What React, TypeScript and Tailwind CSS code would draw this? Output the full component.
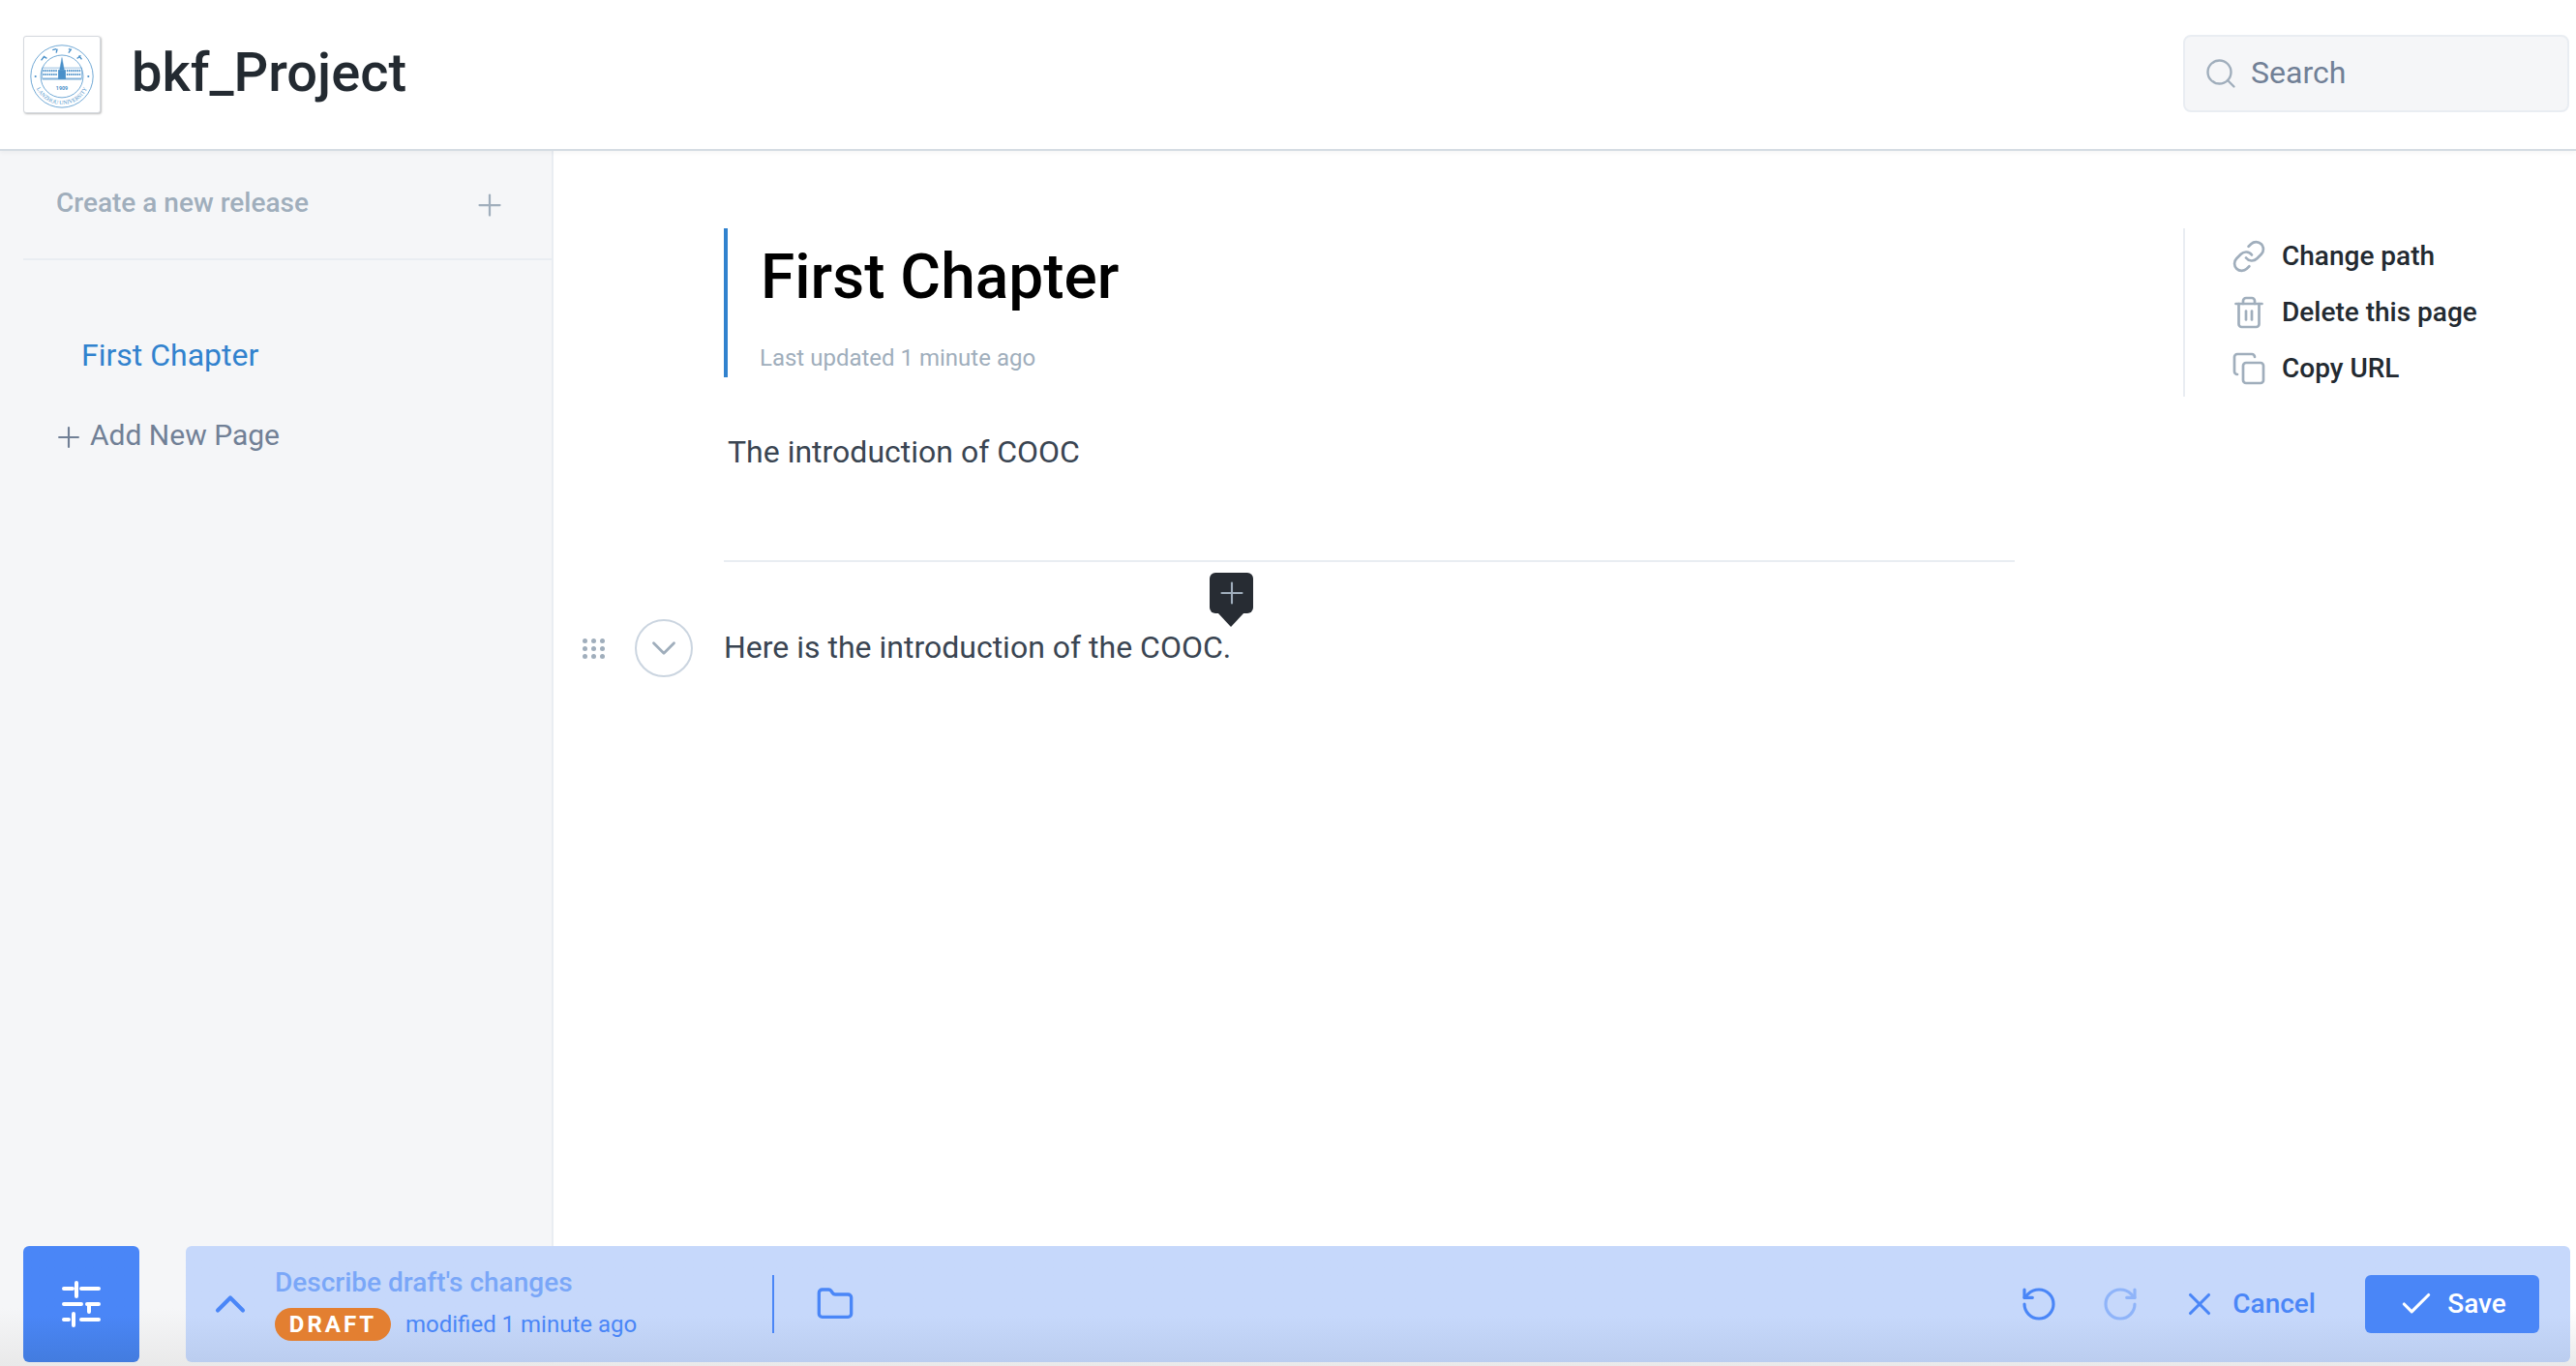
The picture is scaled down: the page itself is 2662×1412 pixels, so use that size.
import { Check, ChevronDown, ChevronUp, Copy, Folder, Link, Plus, RotateCcw, RotateCw, Search, Trash2, X } from "lucide-react"

function Logo() {
  return (
    <div className="w-[80px] h-[80px] shrink-0 rounded-[3px] border border-[#d5d9de] bg-white shadow-[1px_1px_2px_rgba(0,0,0,0.25)]">
      <svg viewBox="0 0 80 80" className="w-full h-full" fill="none" stroke="#4a90c9">
        <circle cx="40" cy="42" r="33" strokeWidth="0.8" />
        <circle cx="40" cy="42" r="22.5" strokeWidth="0.8" />
        {/* building */}
        <path d="M19 33h42v11H19z" strokeWidth="0.6" />
        <path d="M20 36h15M45 36h15M20 40h15M45 40h15" strokeWidth="2.2" strokeDasharray="1.4 0.8" />
        <path d="M40 22l-2.4 13h4.8z" fill="#4a90c9" strokeWidth="0.4" />
        <path d="M36 35h8v10h-8z" fill="#4a90c9" stroke="none" />
        <path d="M19 45h42" strokeWidth="1" />
        <circle cx="12" cy="42" r="1.1" fill="#4a90c9" stroke="none" />
        <circle cx="68" cy="42" r="1.1" fill="#4a90c9" stroke="none" />
        <path id="seal-arc" d="M11.5 50a29.5 29.5 0 0 0 57 0" stroke="none" />
        <text fontSize="6" fill="#4a90c9" stroke="none" fontFamily="Liberation Serif, serif" textAnchor="middle">
          <textPath href="#seal-arc" startOffset="50%">LANZHOU UNIVERSITY</textPath>
        </text>
        <text x="40" y="56" textAnchor="middle" fontSize="5.5" fontWeight="700" fill="#4a90c9" stroke="none" fontFamily="Roboto, sans-serif">1909</text>
        <path d="M18 25l3-4 3 2M30 14l4-1M34 17l1-4M47 13l3 1M47 17l3-4M58 20l3 4M56 23l4-3" strokeWidth="1.4" />
      </svg>
    </div>
  )
}

function DragDots() {
  const dots = [0, 1, 2, 3, 4, 5, 6, 7, 8]
  return (
    <div className="w-[23px] grid grid-cols-3 gap-x-[4px] gap-y-[3px]">
      {dots.map((d) => (
        <span key={d} className="w-[5px] h-[5px] rounded-full bg-[#a0aebc]"></span>
      ))}
    </div>
  )
}

function SettingsIcon() {
  return (
    <svg width="40" height="48" viewBox="0 0 40 48" fill="none" stroke="white" strokeWidth="4" strokeLinecap="round">
      <path d="M2 8h9M20 8h18M15 2v14" />
      <path d="M2 24h18M26 24h12M28 24v8" />
      <path d="M2 40h5M20 40h18M12 34v12" />
    </svg>
  )
}

export default function App() {
  return (
    <div className="relative h-[1412px] w-[2662px] overflow-hidden bg-white font-['Roboto',sans-serif] flex flex-col">
      {/* Header */}
      <header className="h-[156px] shrink-0 border-b-2 border-[#d5dce3] flex items-center pl-[24px] pr-[7px] shadow-[0_2px_4px_rgba(0,0,0,0.04)] z-10 bg-white">
        <Logo />
        <h1 className="ml-[32px] text-[56px] leading-none font-medium text-[#232a31] -mt-[4px]">bkf_Project</h1>
        <div className="ml-auto w-[399px] h-[80px] rounded-[8px] border-2 border-[#e9edf2] bg-[#f5f6f8] flex items-center pl-[19px] -mt-[2px]">
          <Search size={36} strokeWidth={1.6} className="text-[#a0aebc]" />
          <span className="ml-[13px] -mt-[2px] text-[32px] text-[#718096]">Search</span>
        </div>
      </header>

      <div className="flex-1 flex min-h-0">
        {/* Sidebar */}
        <aside className="w-[572px] shrink-0 bg-[#f5f6f8] border-r-2 border-[#e9edf2] pl-[24px]">
          <div className="h-[113px] border-b-2 border-[#e9edf2] flex items-center pl-[34px] pr-[46px] justify-between">
            <span className="text-[28px] font-medium text-[#a0aebc] -mt-[3px]">Create a new release</span>
            <Plus size={36} strokeWidth={1.5} className="text-[#a0aebc]" />
          </div>
          <div className="pl-[60px] pt-[79px] text-[32px] leading-[38px] text-[#3182ce]">First Chapter</div>
          <div className="mt-[44px] flex items-center text-[30px] leading-[36px] text-[#718096]">
            <Plus size={34} strokeWidth={1.5} className="ml-[30px] mt-[5px]" />
            <span className="ml-[5px]">Add New Page</span>
          </div>
        </aside>

        {/* Page content */}
        <main className="flex-1 flex items-start min-w-0 pt-[80px]">
          <div className="w-[1684px] shrink-0 pl-[176px]">
            <div className="w-[1334px]">
              <div className="h-[154px] border-l-4 border-[#3182ce] pl-[34px] pt-[13px]">
                <h2 className="text-[64px] leading-[75px] font-medium text-black">First Chapter</h2>
                <p className="mt-[32px] -ml-[1px] text-[24px] leading-[28px] text-[#a0aebc]">Last updated 1 minute ago</p>
              </div>
              <p className="mt-[58px] pl-[4px] text-[32px] leading-[38px] text-[#3a4552]">The introduction of COOC</p>
              <div className="mt-[93px] h-[2px] bg-[#e9edf2]"></div>
            </div>
            <div className="relative mt-[59px] -ml-[146px] flex items-center">
              <DragDots />
              <span className="ml-[31px] w-[60px] h-[60px] rounded-full border-2 border-[#cbd5e0] flex items-center justify-center">
                <ChevronDown size={42} strokeWidth={1.6} className="text-[#a0aebc]" />
              </span>
              <p className="ml-[32px] -mt-[2px] text-[32px] leading-[38px] text-[#3a4552]">Here is the introduction of the COOC.</p>
              <div className="absolute left-[648px] -top-[48px] w-[45px] h-[42px] rounded-[6px] bg-[#272c33] flex items-center justify-center">
                <Plus size={36} strokeWidth={1.4} className="text-[#a0aebc]" />
                <span className="absolute left-[8px] top-[41px] w-0 h-0 border-x-[14px] border-x-transparent border-t-[15px] border-t-[#272c33]"></span>
              </div>
            </div>
          </div>

          {/* Page actions */}
          <div className="flex-1">
            <div className="border-l-2 border-[#e9edf2] h-[174px] pl-[48px] flex flex-col gap-[18px] pt-[9px] text-[28px] leading-[40px] font-medium text-[#232a31]">
              <div className="flex items-center gap-[16px]">
                <Link size={36} strokeWidth={1.8} className="text-[#a0aebc]" />
                <span>Change path</span>
              </div>
              <div className="flex items-center gap-[16px]">
                <Trash2 size={36} strokeWidth={1.8} className="text-[#a0aebc]" />
                <span>Delete this page</span>
              </div>
              <div className="flex items-center gap-[16px]">
                <Copy size={36} strokeWidth={1.8} className="text-[#a0aebc]" />
                <span>Copy URL</span>
              </div>
            </div>
          </div>
        </main>
      </div>

      {/* Shadow fade at page bottom */}
      <div className="absolute left-0 right-0 bottom-0 h-[60px] bg-gradient-to-b from-transparent to-[#e9e9e9] pointer-events-none"></div>

      {/* Draft bar */}
      <div className="absolute left-[24px] right-[6px] bottom-[4px] h-[120px] flex gap-[48px]">
        <button className="w-[120px] rounded-[6px] bg-gradient-to-b from-[#4a86f7] from-60% to-[#437cdf] flex items-center justify-center">
          <SettingsIcon />
        </button>
        <div className="flex-1 rounded-[6px] bg-gradient-to-b from-[#c6d8fb] from-60% to-[#bbcdef] flex items-center pl-[20px] pr-[32px]">
          <ChevronUp size={52} strokeWidth={1.9} className="text-[#4a86f7]" />
          <div className="ml-[20px] w-[514px] h-[60px] flex flex-col justify-center">
            <div className="text-[28px] leading-[32px] font-medium text-[#7aa7f8] mt-[1px]">Describe draft's changes</div>
            <div className="mt-[9px] flex items-center">
              <span className="w-[120px] h-[34px] rounded-full bg-[#e37f31] text-white text-[24px] font-bold tracking-[3px] flex items-center justify-center">DRAFT</span>
              <span className="ml-[15px] text-[24px] text-[#4a86f7]">modified 1 minute ago</span>
            </div>
          </div>
          <div className="w-[2px] h-[60px] bg-[#4a86f7]"></div>
          <Folder size={40} strokeWidth={2} className="ml-[43px] text-[#4a86f7]" />
          <div className="ml-auto flex items-center">
            <RotateCcw size={40} strokeWidth={1.9} className="text-[#4a86f7]" />
            <RotateCw size={40} strokeWidth={1.9} className="ml-[44px] text-[#8fb4f9]" />
            <X size={38} strokeWidth={2} className="ml-[43px] text-[#4a86f7]" />
            <span className="ml-[15px] text-[28px] font-medium text-[#4a86f7]">Cancel</span>
            <button className="ml-[51px] w-[180px] h-[60px] rounded-[6px] bg-[#4a86f7] flex items-center justify-center gap-[13px] text-white text-[28px] font-medium">
              <Check size={38} strokeWidth={2} />
              <span>Save</span>
            </button>
          </div>
        </div>
      </div>
    </div>
  )
}
